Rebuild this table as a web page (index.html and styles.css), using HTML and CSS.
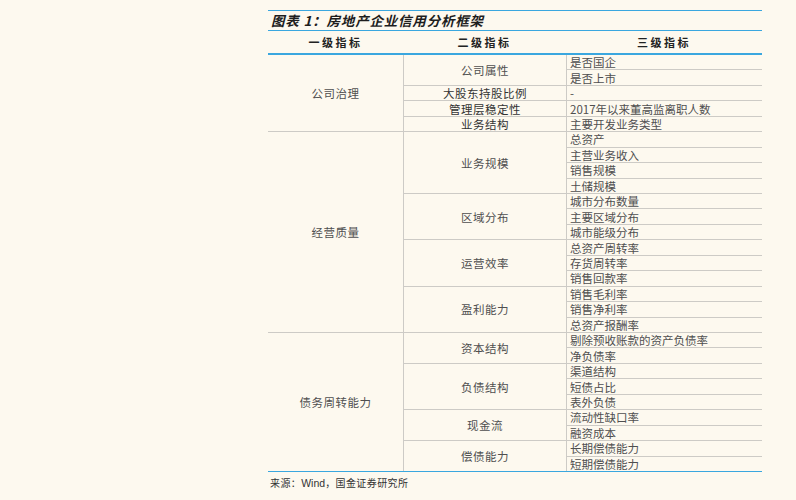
FILE: index.html
```html
<!DOCTYPE html>
<html lang="zh">
<head>
<meta charset="utf-8">
<link rel="stylesheet" href="styles.css">
</head>
<body>
<div class="figure">
  <div class="title">图表 1：房地产企业信用分析框架</div>
  <div class="head">
    <div class="hc">一级指标</div>
    <div class="hc">二级指标</div>
    <div class="hc">三级指标</div>
  </div>
  <div class="grid">
    <div class="c c1 s5">公司治理</div>
    <div class="c c2 s2">公司属性</div>
    <div class="c c3">是否国企</div>
    <div class="c c3">是否上市</div>
    <div class="c c2 dk">大股东持股比例</div>
    <div class="c c3">-</div>
    <div class="c c2 dk">管理层稳定性</div>
    <div class="c c3">2017年以来董高监离职人数</div>
    <div class="c c2 dk">业务结构</div>
    <div class="c c3">主要开发业务类型</div>

    <div class="c c1 s13">经营质量</div>
    <div class="c c2 s4">业务规模</div>
    <div class="c c3">总资产</div>
    <div class="c c3">主营业务收入</div>
    <div class="c c3">销售规模</div>
    <div class="c c3">土储规模</div>
    <div class="c c2 s3">区域分布</div>
    <div class="c c3">城市分布数量</div>
    <div class="c c3">主要区域分布</div>
    <div class="c c3">城市能级分布</div>
    <div class="c c2 s3">运营效率</div>
    <div class="c c3">总资产周转率</div>
    <div class="c c3">存货周转率</div>
    <div class="c c3">销售回款率</div>
    <div class="c c2 s3">盈利能力</div>
    <div class="c c3">销售毛利率</div>
    <div class="c c3">销售净利率</div>
    <div class="c c3">总资产报酬率</div>

    <div class="c c1 s9">债务周转能力</div>
    <div class="c c2 s2">资本结构</div>
    <div class="c c3">剔除预收账款的资产负债率</div>
    <div class="c c3">净负债率</div>
    <div class="c c2 s3">负债结构</div>
    <div class="c c3">渠道结构</div>
    <div class="c c3">短债占比</div>
    <div class="c c3">表外负债</div>
    <div class="c c2 s2">现金流</div>
    <div class="c c3">流动性缺口率</div>
    <div class="c c3">融资成本</div>
    <div class="c c2 s2">偿债能力</div>
    <div class="c c3">长期偿债能力</div>
    <div class="c c3">短期偿债能力</div>
  </div>
  <div class="source">来源：<span class="lat">Wind</span>，国金证券研究所</div>
</div>
</body>
</html>
```
FILE: styles.css
```css
html, body {
  margin: 0;
  padding: 0;
  background: #fdf9ef;
}
body {
  font-family: "Noto Sans CJK SC", "Noto Sans", sans-serif;
  color: #3a3a3a;
}
.figure {
  width: 494px;
  margin: 10px 0 0 268px;
}
.title {
  border-top: 1.5px solid #3aa7df;
  border-bottom: 1.5px solid #3aa7df;
  height: 19px;
  line-height: 19px;
  padding-left: 3px;
  font-size: 13.5px;
  font-weight: 700;
  font-style: italic;
  color: #1e1e1e;
  letter-spacing: 0.8px;
}
.head {
  display: grid;
  grid-template-columns: 135px 163px 196px;
  height: 22px;
  border-bottom: 2px solid #3aa7df;
}
.hc {
  display: flex;
  align-items: center;
  justify-content: center;
  font-size: 11px;
  font-weight: 700;
  letter-spacing: 2.5px;
  color: #222;
}
.grid {
  display: grid;
  grid-template-columns: 135px 162px 195px;
  grid-template-rows: repeat(27, 1fr);
  gap: 1px;
  height: 416px;
  background: #cdcbc6;
  border-bottom: 1.5px solid #3aa7df;
}
.c {
  background: #fdf9ef;
  display: flex;
  align-items: center;
  font-size: 11.5px;
  line-height: 14px;
  color: #4f4f4f;
  white-space: nowrap;
}
.c1 {
  grid-column: 1;
  justify-content: center;
  letter-spacing: 0.5px;
}
.c2 {
  grid-column: 2;
  justify-content: center;
  letter-spacing: 0.5px;
}
.c3 {
  grid-column: 3;
  padding-left: 3px;
}
.dk {
  color: #333;
}
.s2 { grid-row: span 2; }
.s3 { grid-row: span 3; }
.s4 { grid-row: span 4; }
.s5 { grid-row: span 5; }
.s9 { grid-row: span 9; }
.s13 { grid-row: span 13; }
.source {
  padding: 3px 0 0 2px;
  font-size: 10px;
  color: #333;
  letter-spacing: 0.4px;
}
.lat {
  font-family: "Liberation Sans", sans-serif;
  font-size: 10.5px;
  letter-spacing: 0;
}
```
